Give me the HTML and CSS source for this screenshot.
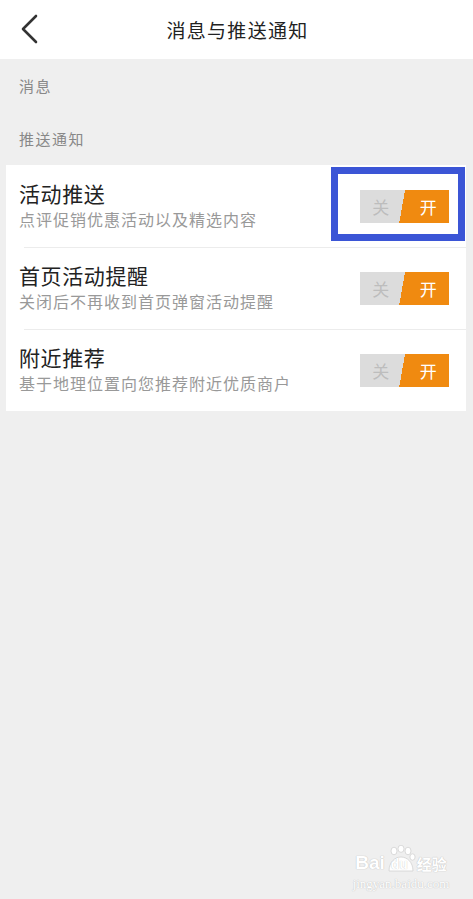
FILE: index.html
```html
<!DOCTYPE html>
<html lang="zh">
<head>
<meta charset="utf-8">
<link rel="stylesheet" href="styles.css">
</head>
<body>
<div class="page">
  <header class="topbar">
    <svg class="back" width="20" height="30" viewBox="0 0 20 30"><polyline points="16,2 3,15 16,28" fill="none" stroke="#333" stroke-width="2.6" stroke-linecap="round" stroke-linejoin="round"/></svg>
    <h1 class="title">消息与推送通知</h1>
  </header>
  <div class="section-label first">消息</div>
  <div class="section-label">推送通知</div>
  <div class="card">
    <div class="row">
      <div class="text">
        <div class="row-title">活动推送</div>
        <div class="row-sub">点评促销优惠活动以及精选内容</div>
      </div>
      <div class="toggle"><span class="off">关</span><span class="on">开</span></div>
      <div class="highlight"></div>
    </div>
    <div class="row">
      <div class="text">
        <div class="row-title">首页活动提醒</div>
        <div class="row-sub">关闭后不再收到首页弹窗活动提醒</div>
      </div>
      <div class="toggle"><span class="off">关</span><span class="on">开</span></div>
    </div>
    <div class="row">
      <div class="text">
        <div class="row-title">附近推荐</div>
        <div class="row-sub">基于地理位置向您推荐附近优质商户</div>
      </div>
      <div class="toggle"><span class="off">关</span><span class="on">开</span></div>
    </div>
  </div>
  <div class="watermark">
    <div class="wm-top">
      <span class="wm-bai">Bai</span>
      <span class="paw-wrap">
        <svg class="paw" width="30" height="28" viewBox="0 0 30 28">
          <g fill="#fff" stroke="#d2d2d2" stroke-width="0.8">
            <ellipse cx="8" cy="6" rx="3" ry="3.8"/>
            <ellipse cx="15" cy="3.8" rx="3" ry="3.6"/>
            <ellipse cx="22" cy="6" rx="3" ry="3.8"/>
            <ellipse cx="26.5" cy="12" rx="2.6" ry="3.2"/>
            <path d="M3 26 C3 17 9 12 15 12 C21 12 27 17 27 26 Z"/>
          </g>
        </svg>
        <span class="wm-du">du</span>
      </span>
      <span class="wm-jy">经验</span>
    </div>
    <div class="wm-url">jingyan.baidu.com</div>
  </div>
</div>
</body>
</html>
```
FILE: styles.css
```css
html, body {
  margin: 0;
  padding: 0;
  background: #efefef;
}
body {
  font-family: "Noto Sans CJK SC", "Noto Sans", sans-serif;
  width: 473px;
  height: 899px;
  overflow: hidden;
}
.page {
  position: relative;
  height: 899px;
}
.topbar {
  height: 59px;
  background: #fff;
  display: flex;
  align-items: center;
  justify-content: center;
  position: relative;
}
.back {
  position: absolute;
  left: 20px;
  top: 14px;
}
.title {
  margin: 0;
  font-size: 19px;
  font-weight: 400;
  color: #222;
  letter-spacing: 1.3px;
  line-height: 1;
  padding-left: 2px;
}
.section-label {
  font-size: 15px;
  color: #888;
  letter-spacing: 1.5px;
  padding-left: 19px;
  line-height: 20px;
  margin-top: 33px;
}
.section-label.first {
  margin-top: 17px;
}
.card {
  margin: 16px 7px 0 6px;
  background: #fff;
}
.row {
  position: relative;
  height: 82px;
  display: flex;
  align-items: center;
  justify-content: space-between;
  padding: 0 17px 0 13px;
  box-sizing: border-box;
}
.row + .row::before {
  content: "";
  position: absolute;
  left: 18px;
  right: 0;
  top: 0;
  height: 1px;
  background: #ececec;
}
.text {
  display: flex;
  flex-direction: column;
  margin-top: -4px;
}
.row-title {
  font-size: 21px;
  color: #222;
  letter-spacing: 0.6px;
  line-height: 28px;
}
.row-sub {
  font-size: 16px;
  color: #999;
  letter-spacing: 1px;
  line-height: 22px;
  margin-top: 1px;
}
.toggle {
  width: 89px;
  height: 33px;
  display: flex;
  background: linear-gradient(100deg, #dcdcdc 47.5%, #f08a10 47.5%);
  font-size: 17px;
  line-height: 33px;
}
.toggle span {
  flex: 1;
  text-align: center;
}
.toggle .off {
  color: #bdbdbd;
  padding-right: 3px;
}
.toggle .on {
  color: #fff;
  padding-left: 3px;
}
.highlight {
  position: absolute;
  left: 325px;
  top: 2px;
  width: 134px;
  height: 74px;
  border: 7px solid #3b55d6;
  box-sizing: border-box;
}
.watermark {
  position: absolute;
  left: 355px;
  top: 844px;
  width: 92px;
  display: flex;
  flex-direction: column;
  align-items: center;
  color: #fff;
  text-shadow: 0 0 1px #c4c4c4, 0 0 1px #c4c4c4;
}
.wm-top {
  display: flex;
  align-items: flex-end;
  font-family: "Liberation Sans", sans-serif;
  font-weight: 700;
  height: 29px;
}
.wm-bai {
  font-size: 19px;
  line-height: 19px;
  margin-bottom: 1px;
}
.paw-wrap {
  position: relative;
  width: 30px;
  height: 28px;
  margin-left: 1px;
}
.paw {
  display: block;
}
.wm-du {
  position: absolute;
  left: 5px;
  top: 12px;
  font-size: 14px;
  line-height: 14px;
  color: #fff;
  text-shadow: 0 0 1px #bbb;
}
.wm-jy {
  font-family: "Noto Sans CJK SC", sans-serif;
  font-size: 15px;
  line-height: 17px;
  font-weight: 700;
  margin-left: 1px;
  margin-bottom: 1px;
}
.wm-url {
  font-family: "Liberation Serif", serif;
  font-size: 13px;
  line-height: 15px;
  margin-top: 3px;
}
```
